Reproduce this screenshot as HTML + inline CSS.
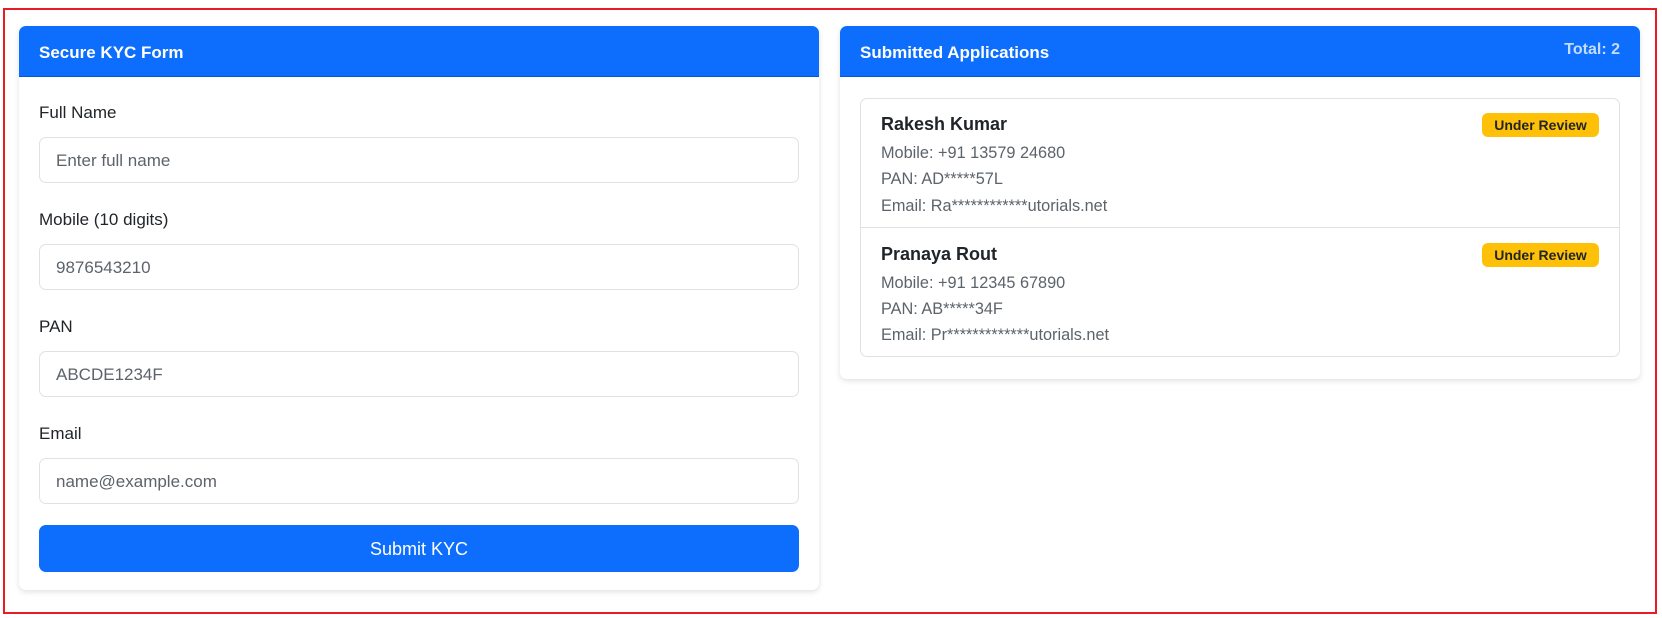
<!DOCTYPE html>
<html><head><style>
*{box-sizing:border-box;margin:0;padding:0}
body{width:1662px;height:618px;background:#fff;font-family:"Liberation Sans",sans-serif;color:#212529;position:relative;overflow:hidden}
.frame{position:absolute;left:3px;top:8px;width:1654px;height:606px;border:2px solid #e81c24}
.card{position:absolute;background:#fff;border-radius:7px;box-shadow:0 2px 6px rgba(0,0,0,.12);overflow:hidden}
.hd{background:#0d6efd;color:#fff;height:51px;font-weight:bold;font-size:17px;line-height:54px;padding-left:20px;position:relative;border-bottom:1px solid #0a58ca}
.lbl{position:absolute;left:20px;font-size:17px}
.inp{position:absolute;left:20px;width:760px;height:46px;border:1px solid #dee2e6;border-radius:7px;font-size:17px;line-height:46px;padding-left:16px;color:#5c636a}
.btn{position:absolute;left:20px;width:760px;height:47px;background:#0d6efd;border-radius:7px;color:#fff;font-size:18px;text-align:center;line-height:49px}
.list{position:absolute;left:20px;top:72px;width:760px;height:259px;border:1px solid #dee2e6;border-radius:7px}
.nm{font-size:18px;font-weight:bold;position:absolute;left:20px}
.ln{position:absolute;left:20px;font-size:16.3px;color:#5c636a;white-space:nowrap}
.badge{position:absolute;right:20px;width:117px;height:24px;background:#ffc107;border-radius:6px;font-size:14px;font-weight:bold;text-align:center;line-height:24px;color:#212529}
</style></head><body>
<div class="frame"></div>
<div class="card" style="left:19px;top:26px;width:800px;height:564px">
 <div class="hd">Secure KYC Form</div>
 <div class="lbl" style="top:77px">Full Name</div>
 <div class="inp" style="top:111px">Enter full name</div>
 <div class="lbl" style="top:184px">Mobile (10 digits)</div>
 <div class="inp" style="top:218px">9876543210</div>
 <div class="lbl" style="top:291px">PAN</div>
 <div class="inp" style="top:325px">ABCDE1234F</div>
 <div class="lbl" style="top:398px">Email</div>
 <div class="inp" style="top:432px">name@example.com</div>
 <div class="btn" style="top:499px">Submit KYC</div>
</div>
<div class="card" style="left:840px;top:26px;width:800px;height:353px">
 <div class="hd">Submitted Applications<span style="position:absolute;right:20px;top:-3px;font-size:16px;color:#c4dcff">Total: 2</span></div>
 <div class="list">
  <div class="nm" style="top:15px">Rakesh Kumar</div>
  <div class="badge" style="top:14px">Under Review</div>
  <div class="ln" style="top:45px">Mobile: +91 13579 24680</div>
  <div class="ln" style="top:71px">PAN: AD*****57L</div>
  <div class="ln" style="top:98px">Email: Ra************utorials.net</div>
  <div style="position:absolute;left:0;right:0;top:128px;border-top:1px solid #dee2e6"></div>
  <div class="nm" style="top:145px">Pranaya Rout</div>
  <div class="badge" style="top:144px">Under Review</div>
  <div class="ln" style="top:175px">Mobile: +91 12345 67890</div>
  <div class="ln" style="top:201px">PAN: AB*****34F</div>
  <div class="ln" style="top:227px">Email: Pr*************utorials.net</div>
 </div>
</div>
</body></html>
